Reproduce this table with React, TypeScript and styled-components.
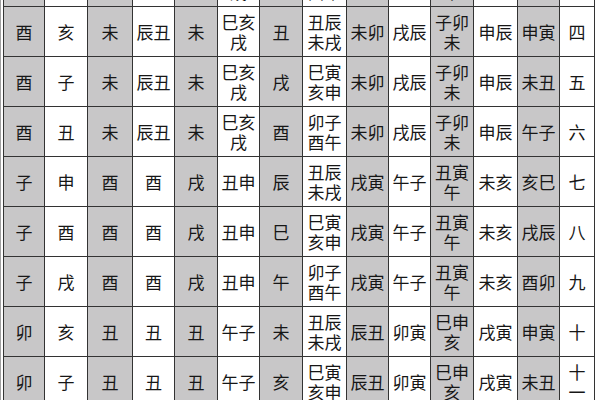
import React from 'react';
import styled, { createGlobalStyle } from 'styled-components';

const GlobalStyle = createGlobalStyle`
  html, body {
    margin: 0;
    padding: 0;
    background: #ffffff;
  }
  body {
    font-family: "Noto Sans CJK SC", "Noto Sans", sans-serif;
    color: #161616;
  }
`;

const Page = styled.div`
  width: 600px;
  height: 400px;
  overflow: hidden;
  box-sizing: border-box;
  border-left: 1px solid #a0a0a0;
  padding-left: 2px;
`;

const colWidths = [41, 43, 45, 42, 43, 42, 43, 44, 42, 42, 43, 44, 42, 35];

const Grid = styled.div`
  display: grid;
  grid-template-columns: ${colWidths.map(w => `${w}px`).join(' ')};
  grid-auto-rows: 50px;
  width: max-content;
  border-left: 1px solid #333;
  /* the first row is cut off by the top edge of the picture */
  margin-top: -43px;
`;

const Cell = styled.div<{ $shade: boolean }>`
  box-sizing: border-box;
  border-right: 1px solid #333;
  border-bottom: 1px solid #333;
  background: ${p => (p.$shade ? '#c8c7c8' : '#ffffff')};
  display: flex;
  flex-direction: column;
  align-items: center;
  justify-content: center;
  font-size: 17px;
  line-height: 20px;
  white-space: nowrap;
  overflow: hidden;
`;

const Line = styled.span`
  display: block;
`;

type Row = (string | string[])[];

const rows: Row[] = [
  ['酉', '戌', '未', '辰丑', '未', ['巳亥', '戌'], '子', ['卯子', '酉午'], '未卯', '戌辰', ['子卯', '未'], '申辰', '午子', '三'],
  ['酉', '亥', '未', '辰丑', '未', ['巳亥', '戌'], '丑', ['丑辰', '未戌'], '未卯', '戌辰', ['子卯', '未'], '申辰', '申寅', '四'],
  ['酉', '子', '未', '辰丑', '未', ['巳亥', '戌'], '戌', ['巳寅', '亥申'], '未卯', '戌辰', ['子卯', '未'], '申辰', '未丑', '五'],
  ['酉', '丑', '未', '辰丑', '未', ['巳亥', '戌'], '酉', ['卯子', '酉午'], '未卯', '戌辰', ['子卯', '未'], '申辰', '午子', '六'],
  ['子', '申', '酉', '酉', '戌', '丑申', '辰', ['丑辰', '未戌'], '戌寅', '午子', ['丑寅', '午'], '未亥', '亥巳', '七'],
  ['子', '酉', '酉', '酉', '戌', '丑申', '巳', ['巳寅', '亥申'], '戌寅', '午子', ['丑寅', '午'], '未亥', '戌辰', '八'],
  ['子', '戌', '酉', '酉', '戌', '丑申', '午', ['卯子', '酉午'], '戌寅', '午子', ['丑寅', '午'], '未亥', '酉卯', '九'],
  ['卯', '亥', '丑', '丑', '丑', '午子', '未', ['丑辰', '未戌'], '辰丑', '卯寅', ['巳申', '亥'], '戌寅', '申寅', '十'],
  ['卯', '子', '丑', '丑', '丑', '午子', '亥', ['巳寅', '亥申'], '辰丑', '卯寅', ['巳申', '亥'], '戌寅', '未丑', ['十', '一']],
];

const App: React.FC = () => {
  return (
    <>
      <GlobalStyle />
      <Page>
        <Grid>
          {rows.map((row, r) =>
            row.map((cell, c) => {
              const lines = Array.isArray(cell) ? cell : [cell];
              return (
                <Cell key={`${r}-${c}`} $shade={c % 2 === 0}>
                  {lines.map((text, i) => (
                    <Line key={i}>{text}</Line>
                  ))}
                </Cell>
              );
            })
          )}
        </Grid>
      </Page>
    </>
  );
};

export default App;
